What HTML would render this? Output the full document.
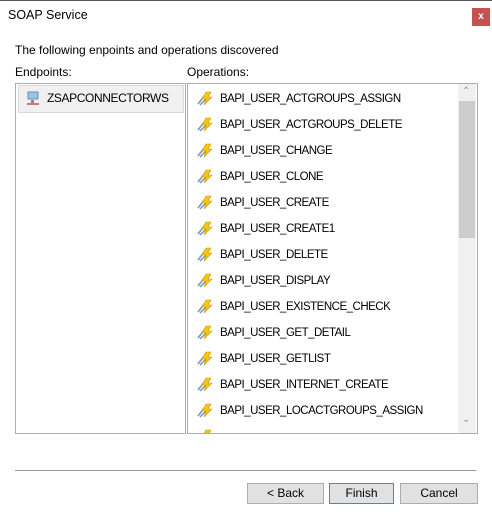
<!DOCTYPE html>
<html><head><style>
body{margin:0;width:492px;height:518px;background:#fff;font-family:"Liberation Sans",sans-serif;font-size:12px;color:#000;position:relative;overflow:hidden}
.a{position:absolute}
.top{left:0;top:0;width:492px;height:1px;background:#555}
.box{border:1px solid #adadad;background:#fff}
.row{position:absolute;left:8px;height:26px;line-height:26px;white-space:nowrap}
.row svg{position:absolute;left:0;top:5px}
.row span{position:absolute;left:24px;font-size:11.5px;letter-spacing:-0.5px}
.btn{position:absolute;top:483px;height:19px;border:1px solid #adadad;background:#e1e1e1;text-align:center;line-height:19px}
</style></head><body>
<div class="a top"></div>
<div class="a" style="left:8px;top:8px;font-size:12.5px">SOAP Service</div>
<div class="a" style="left:472px;top:8px;width:18px;height:18px;background:#c75050;color:#fff;font-weight:bold;font-size:10px;text-align:center;line-height:17px">x</div>
<div class="a" style="left:15px;top:43px">The following enpoints and operations discovered</div>
<div class="a" style="left:15px;top:65px">Endpoints:</div>
<div class="a" style="left:187px;top:65px">Operations:</div>
<div class="a box" style="left:15px;top:83px;width:169px;height:349px">
 <div class="a" style="left:2px;top:1px;width:164px;height:26px;background:#f0f0f0;border:1px solid #dadada"></div>
 <svg class="a" style="left:10px;top:6px" width="16" height="16"><rect x="2" y="2" width="10" height="7" fill="#9cc3e6" stroke="#6a8fb0"/><rect x="5" y="10" width="3" height="3" fill="#888"/><path d="M1 14h12" stroke="#c05050" stroke-width="1.5"/></svg>
 <div class="a" style="left:31px;top:7px;letter-spacing:-0.4px">ZSAPCONNECTORWS</div>
</div>
<div class="a box" style="left:187px;top:83px;width:289px;height:349px;overflow:hidden">
 <div class="a" style="left:270px;top:0;width:18px;height:349px;background:#f0f0f0"></div>
 <div class="a" style="left:271px;top:17px;width:16px;height:137px;background:#cdcdcd"></div>
 <div class="a" style="left:274px;top:2px;color:#999;font-size:10px">&#8963;</div>
 <div class="a" style="left:274px;top:330px;color:#999;font-size:10px">&#8964;</div>
 <div id="ops"></div>
</div>
<div class="a" style="left:15px;top:470px;width:461px;height:1px;background:#999"></div>
<div class="btn" style="left:247px;width:75px">&lt; Back</div>
<div class="btn" style="left:329px;width:63px;border-color:#3c8bd6">Finish</div>
<div class="btn" style="left:400px;width:76px">Cancel</div>
<script>
var n=["BAPI_USER_ACTGROUPS_ASSIGN","BAPI_USER_ACTGROUPS_DELETE","BAPI_USER_CHANGE","BAPI_USER_CLONE","BAPI_USER_CREATE","BAPI_USER_CREATE1","BAPI_USER_DELETE","BAPI_USER_DISPLAY","BAPI_USER_EXISTENCE_CHECK","BAPI_USER_GET_DETAIL","BAPI_USER_GETLIST","BAPI_USER_INTERNET_CREATE","BAPI_USER_LOCACTGROUPS_ASSIGN",""];
var h="";n.forEach(function(t,i){h+='<div class="row" style="top:'+(2+i*26)+'px"><svg width="18" height="16"><path d="M2 13L9 4M4 14L12 6" stroke="#7a93b0" stroke-width="1.5"/><path d="M10 1L6 8h4l-2 6 8-8h-4l3-5z" fill="#f5c518" stroke="#c99a00" stroke-width=".6"/></svg><span>'+t+'</span></div>'});
document.getElementById("ops").innerHTML=h;
</script>
</body></html>
